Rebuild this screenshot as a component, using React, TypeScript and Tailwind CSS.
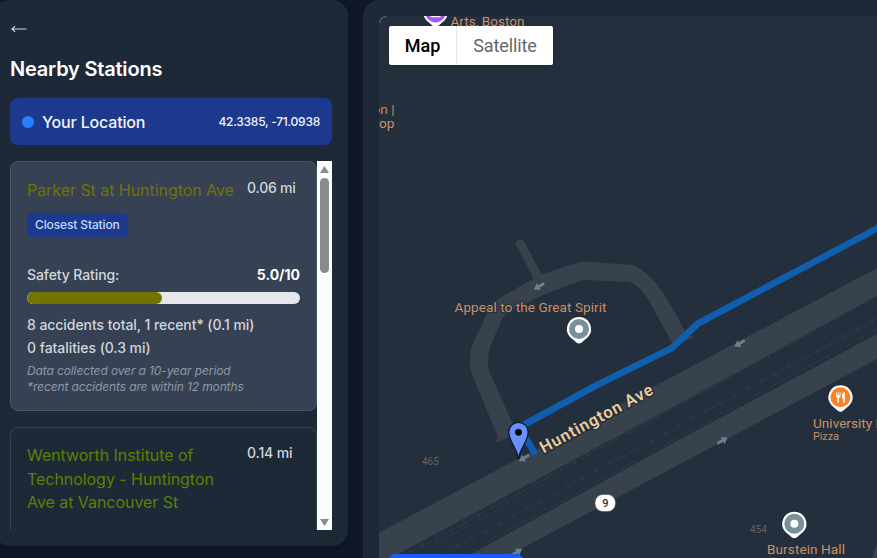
import React from "react";

const ROBOTO = "Roboto, Arial, sans-serif";

function PoiPin({ x, y, color, children }: { x: number; y: number; color: string; children?: React.ReactNode }) {
  return (
    <g transform={`translate(${x} ${y})`}>
      <path d="M0-12A12 12 0 0 1 9 8L2.6 13.6Q0 15.6-2.6 13.6L-9 8A12 12 0 0 1 0-12Z" fill="#fff" />
      <circle r="10" fill={color} />
      {children}
    </g>
  );
}

function OneWay({ x, y, flip }: { x: number; y: number; flip?: boolean }) {
  return (
    <path
      transform={`translate(${x} ${y}) rotate(${flip ? -30 : 150})`}
      d="M-6-1.3H0V-4L6 0L0 4V1.3H-6Z"
      fill="#6d7f90"
    />
  );
}

function railTicks(x0: number, y0: number, slope: number, step: number) {
  const parts: string[] = [];
  for (let x = x0; x < 880; x += step) {
    const y = y0 - (x - x0) * slope;
    parts.push(`M${x - 1.3} ${y - 2.6}L${x + 1.3} ${y + 2.6}`);
  }
  return parts.join("");
}

function MapCanvas() {
  return (
    <svg viewBox="379 16 498 542" width="498" height="542" className="block" fontFamily={ROBOTO}>
      <rect x="379" y="16" width="498" height="542" fill="#242f3d" />
      <g fill="#38424d">
        <path d="M379 532.7L877 268V296L723 380L430 536.7L379 564Z" />
        <path d="M465 558L473 553L680 439.3L877 334V359L680 464L504 558Z" />
        <path d="M872 558L877 543V558Z" />
        <path d="M495 443.5L498 437L473 377Q470 369 470 363Q470 351 473 343L491 305Q494 301 498 299L540 275L576 263Q581 261.500 586 261.700L633 265Q640 267 653 280Q662 289 678 318L687 335L695 337L674 346L672 343L652 306Q645 293 637 286Q632 282 626 281.800L583 280L545 294L510 311Q504 315 502 319L490 347Q488 355 488 362Q488 368 490 373L511 420L518 433Z" />
      </g>
      <path d="M520.500 244L541 283" stroke="#38424d" strokeWidth="9" strokeLinecap="round" />
      <g stroke="#2e3845" fill="none" strokeWidth="1">
        <path d="M409.400 553.200L877 295.800" />
        <path d="M444.200 553.200L877 318.900" />
        <path d="M430 547L560 475" />
        <path d="M458 558L877 329" />
        <path stroke="#333d4a" d={railTicks(409.4, 553.2, 0.5506, 13.8)} />
        <path stroke="#333d4a" d={railTicks(444.2, 553.2, 0.5414, 13.8)} />
      </g>
      <path d="M534 452L519 427.500L597 385L672 348L698 323.500L880 227" fill="none" stroke="#105eae" strokeWidth="6.600" strokeLinecap="round" strokeLinejoin="round" />
      <OneWay x={539} y={286.500} />
      <OneWay x={739.500} y={343.500} />
      <OneWay x={524} y={458} />
      <OneWay x={722.500} y={440.500} flip />
      <OneWay x={517} y={552} flip />

      <g fill="#cd9064" stroke="#242f3d" strokeWidth="2.500" paintOrder="stroke" strokeLinejoin="round">
        <text x="450.500" y="26" fontSize="13.600" textLength="74">Arts, Boston</text>
        <text x="394.500" y="114" fontSize="13.600" textAnchor="end">on |</text>
        <text x="394.500" y="128" fontSize="13.600" textAnchor="end">op</text>
        <text x="454.500" y="312" fontSize="13.600" textLength="152">Appeal to the Great Spirit</text>
        <text x="813" y="427.500" fontSize="13.600">University House of</text>
        <text x="813" y="439.500" fontSize="11" textLength="26">Pizza</text>
        <text x="767" y="554" fontSize="13.600" textLength="78">Burstein Hall</text>
      </g>
      <g fill="#6c625c" fontSize="10">
        <text x="422" y="464.500">465</text>
        <text x="750" y="533">454</text>
      </g>
      <text transform="translate(543.500 453.500) rotate(-28.500)" fontSize="16.500" fontWeight="600" textLength="126" fill="#edcb9b" stroke="#242f3d" strokeWidth="3" paintOrder="stroke">Huntington Ave</text>

      <rect x="595" y="494.500" width="20.500" height="17" rx="8" fill="#fff" stroke="#4b4a48" strokeWidth=".5" />
      <text x="605.500" y="507" fontSize="11" fontWeight="500" textAnchor="middle" fill="#2d2d2d">9</text>

      <PoiPin x={435.500} y={12.500} color="#a855f7">
        <path d="M-5 4H5" stroke="#fff" strokeWidth="1.500" />
      </PoiPin>
      <PoiPin x={579} y={329} color="#78909c"><circle r="4" fill="#fff" /></PoiPin>
      <PoiPin x={794.300} y={523.700} color="#78909c"><circle r="4" fill="#fff" /></PoiPin>
      <PoiPin x={840.500} y={397.200} color="#ff8126">
        <path d="M-4.500-5V-1.500Q-4.500 .3-3 .5V5.500H-1.500V.5Q0 .3 0-1.500V-5H-.8V-2H-1.800V-5H-2.700V-2H-3.700V-5ZM4.300-5.200Q1.500-4.500 1.500-1V1H2.800V5.500H4.300Z" fill="#fff" />
      </PoiPin>

      <path d="M518.500 459.500C517.500 448 508.800 442 508.800 432A9.700 9.700 0 0 1 528.200 432C528.200 442 519.500 448 518.500 459.500Z" fill="#6991fd" stroke="#10182a" strokeWidth="1.300" />
      <circle cx="518.500" cy="432.300" r="3.400" fill="#000" />
      <path d="M379.500 23Q380 17 386 16.500" fill="none" stroke="#8b929b" strokeWidth=".7" />
      <path d="M379 16H385Q379.500 16.500 379 22Z" fill="#1e2938" />
    </svg>
  );
}

function Sidebar() {
  return (
    <aside className="-ml-[6px] flex h-[546px] w-[354px] shrink-0 flex-col rounded-2xl bg-[#1e2938] p-4 shadow-lg">
      <button className="mt-[1px] h-6 self-start text-base leading-6 text-[#d1d5dc]">
        <svg width="17" height="10" viewBox="0 0 17 10" fill="none" stroke="currentColor" strokeWidth="1.200">
          <path d="M1.500 5H16.500M5 2Q3.500 4.500 1.500 5Q3.500 5.500 5 8" />
        </svg>
      </button>
      <h1 className="mt-[14px] text-xl leading-7 font-semibold tracking-[-0.2px] text-white">Nearby Stations</h1>
      <div className="mt-[15px] flex h-[47px] shrink-0 items-center rounded-lg bg-[#1c398e] px-3">
        <span className="mr-2 size-3 rounded-full bg-[#2b7fff]" />
        <span className="text-base font-medium tracking-[-0.17px] text-gray-100">Your Location</span>
        <span className="ml-auto text-xs font-medium tracking-[-0.25px] text-gray-100">42.3385, -71.0938</span>
      </div>
      <div className="mt-4 flex h-[369px] shrink-0 overflow-hidden">
        <div className="flex w-[307px] shrink-0 flex-col gap-4">
          <article className="h-[250px] shrink-0 rounded-lg border border-[#4a5565] bg-[#364153] p-4">
            <div className="flex items-start">
              <h2 className="w-[220px] text-base leading-6 tracking-[-0.05px] whitespace-nowrap text-[#737300]">Parker St at Huntington Ave</h2>
              <span className="text-sm font-medium tracking-[-0.2px] text-[#d1d5dc]">0.06 mi</span>
            </div>
            <div className="mt-[11px] flex">
              <span className="rounded-sm bg-[#1c398e] px-2 py-1 text-xs font-medium tracking-[-0.13px] text-[#bedbff]">Closest Station</span>
            </div>
            <div className="mt-[28px] flex justify-between text-sm">
              <span className="font-medium tracking-[-0.1px] text-[#d1d5dc]">Safety Rating:</span>
              <span className="font-bold text-white">5.0/10</span>
            </div>
            <div className="mt-[7px] h-3 overflow-hidden rounded-full bg-gray-200">
              <div className="h-full w-[135px] rounded-full bg-[#737300]" />
            </div>
            <p className="mt-[11px] text-sm font-medium tracking-[-0.06px] text-[#d1d5dc]">8 accidents total, 1 recent* (0.1 mi)</p>
            <p className="mt-[3px] text-sm font-medium tracking-[-0.06px] text-[#d1d5dc]">0 fatalities (0.3 mi)</p>
            <p className="mt-[5px] text-xs tracking-[-0.12px] text-[#8f98a6] italic">Data collected over a 10-year period<br />*recent accidents are within 12 months</p>
          </article>
          <article className="h-[250px] shrink-0 rounded-lg border border-[#364153] p-4">
            <div className="flex items-start">
              <h2 className="w-[220px] text-base leading-[23.500px] tracking-[-0.05px] text-[#5a8200]">Wentworth Institute of<br />Technology - Huntington<br />Ave at Vancouver St</h2>
              <span className="-mt-[1px] text-sm font-medium tracking-[-0.15px] text-[#d1d5dc]">0.14 mi</span>
            </div>
          </article>
        </div>
        <div className="flex w-[15px] shrink-0 flex-col items-center bg-[#fcfcfc]">
          <svg width="15" height="17" viewBox="0 0 15 17"><path d="M7.500 5L12 12H3Z" fill="#8b8b8b" /></svg>
          <div className="h-[95px] w-[9px] rounded-full bg-[#8b8b8b]" />
          <svg className="mt-auto" width="15" height="15" viewBox="0 0 15 15"><path d="M7.500 11L12 4H3Z" fill="#8b8b8b" /></svg>
        </div>
      </div>
    </aside>
  );
}

export default function App() {
  return (
    <div className="flex h-[558px] w-[877px] gap-[15px] overflow-hidden bg-[#101828] font-['Inter',sans-serif]">
      <Sidebar />
      <main className="h-[600px] w-[560px] shrink-0 rounded-2xl bg-[#1e2938] p-4">
        <div className="relative h-[542px] w-[498px] overflow-hidden">
          <MapCanvas />
          <div className="absolute top-[10px] left-[10px] flex h-[39px] rounded-[2px] bg-white font-['Roboto',sans-serif] text-lg leading-[39px] shadow">
            <button className="w-[68px] border-r border-gray-200 font-medium text-black">Map</button>
            <button className="w-[96px] tracking-[-0.1px] text-[#666]">Satellite</button>
          </div>
          <div className="absolute top-[538px] left-[9px] h-10 w-[136px] rounded-lg bg-[#155dfc]" />
        </div>
      </main>
    </div>
  );
}
